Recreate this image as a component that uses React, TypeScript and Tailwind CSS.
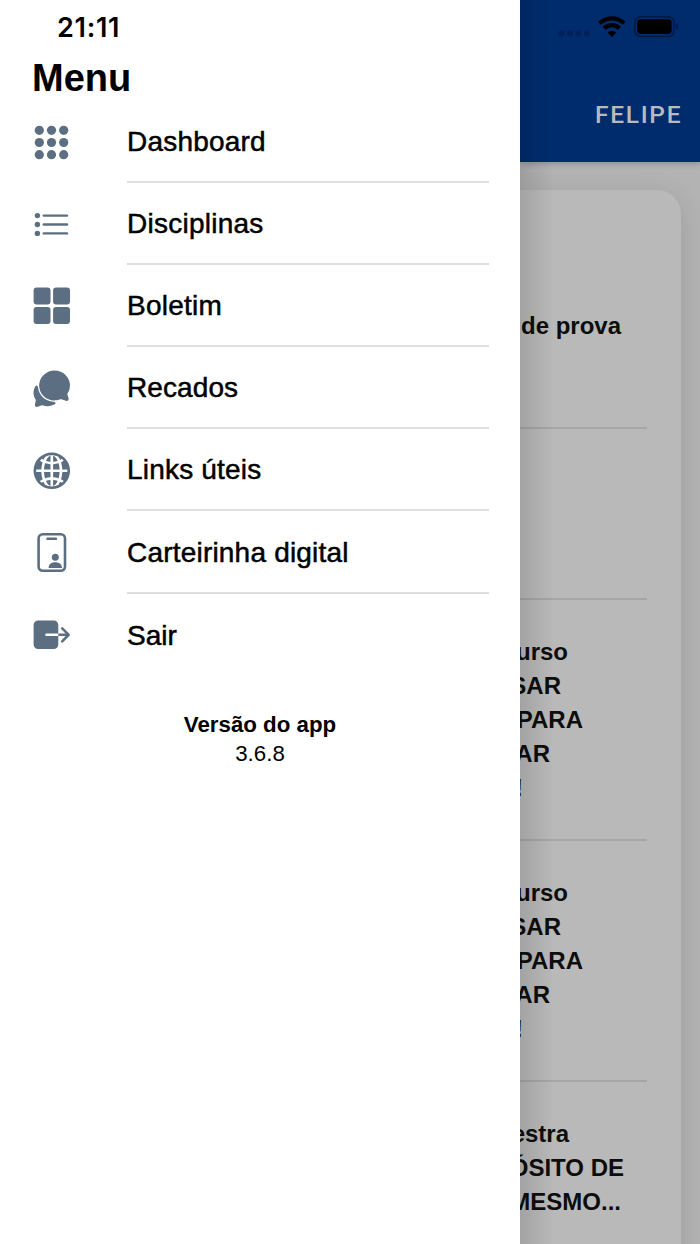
import type { ReactNode } from 'react';
import { IoChatbubbles, IoExit, IoGlobe, IoGrid } from 'react-icons/io5';

interface MenuItem {
  label: string;
  icon: ReactNode;
  spacing: string;
}

interface Notice {
  lines: { text: string; className: string }[];
  className: string;
}

function AppsIcon() {
  const points = [10.3, 22.5, 34.7];
  return (
    <svg viewBox="0 0 45 45" className="w-[45px] h-[45px]" fill="currentColor">
      {points.map((y) => points.map((x) => <circle key={`${x}-${y}`} cx={x} cy={y} r="4.6" />))}
    </svg>
  );
}

function ListIcon() {
  return (
    <svg viewBox="0 0 45 45" className="w-[45px] h-[45px]" fill="currentColor">
      {[13.6, 22.5, 31.4].map((y) => (
        <g key={y}>
          <circle cx="8.4" cy={y} r="2.7" />
          <rect x="13.6" y={y - 1.2} width="25.6" height="2.4" rx="1.2" />
        </g>
      ))}
    </svg>
  );
}

function IdCardIcon() {
  return (
    <svg viewBox="0 0 45 45" className="w-[45px] h-[45px]" fill="currentColor">
      <rect x="9.6" y="4.3" width="26.4" height="36.4" rx="4.2" fill="none" stroke="currentColor" strokeWidth="2.6" />
      <rect x="17.3" y="7.5" width="10.8" height="2.6" rx="1.2" />
      <circle cx="26.3" cy="27.3" r="3.5" />
      <path d="M19.6 38c0-3.6 2.8-5.7 6.7-5.7s6.7 2.1 6.7 5.7z" />
    </svg>
  );
}

const items: MenuItem[] = [
  { label: 'Dashboard', icon: <AppsIcon />, spacing: 'tracking-[0.2px]' },
  { label: 'Disciplinas', icon: <ListIcon />, spacing: 'tracking-[0.25px]' },
  { label: 'Boletim', icon: <IoGrid className="w-[41.6px] h-[41.6px]" />, spacing: 'tracking-[0.25px]' },
  { label: 'Recados', icon: <IoChatbubbles className="w-[41.6px] h-[41.6px]" />, spacing: 'tracking-[0.1px]' },
  { label: 'Links úteis', icon: <IoGlobe className="w-[41.6px] h-[41.6px]" />, spacing: 'tracking-[0.2px]' },
  { label: 'Carteirinha digital', icon: <IdCardIcon />, spacing: 'tracking-[0.2px]' },
  { label: 'Sair', icon: <IoExit className="w-[41.6px] h-[41.6px]" />, spacing: 'tracking-normal' },
];

const course = [
  { text: 'urso', className: 'w-[48px]' },
  { text: 'SAR', className: 'w-[41px]' },
  { text: 'PARA', className: 'w-[63px]' },
  { text: 'AR', className: 'w-[30px]' },
  { text: '!', className: 'w-[3px]' },
];

const notices: Notice[] = [
  { lines: [{ text: 'de prova', className: 'w-[101px]' }], className: 'h-[239px] pt-[119px] border-b-2' },
  { lines: [], className: 'h-[171px] border-b-2' },
  { lines: course, className: 'h-[241px] pt-[35px] border-b-2' },
  { lines: course, className: 'h-[241px] pt-[35px] border-b-2' },
  {
    lines: [
      { text: 'estra', className: 'w-[49px]' },
      { text: 'ÓSITO DE', className: 'w-[104px]' },
      { text: 'MESMO...', className: 'w-[101px]' },
    ],
    className: 'h-[170px] pt-[35px]',
  },
];

function StatusIcons() {
  return (
    <div className="flex items-center h-[54px] pl-[38px]">
      <svg viewBox="0 0 122 26" className="w-[122px] h-[26px]">
        <g fill="#00225a">
          {[0.5, 9, 17.5, 26].map((x) => (
            <rect key={x} x={x} y="16.5" width="6" height="6" rx="1.8" />
          ))}
        </g>
        <g fill="none" stroke="#000" strokeWidth="4.2">
          <path d="M41.5 9.3A17.8 17.8 0 0 1 66.2 9.3" />
          <path d="M46.2 14.3A11 11 0 0 1 61.5 14.3" />
        </g>
        <path d="M49.6 18.5Q53.9 15 58.2 18.5L53.9 23z" />
        <rect x="76.8" y="2.8" width="39.2" height="19.6" rx="5.5" fill="none" stroke="#001b45" strokeWidth="1.7" />
        <rect x="79.2" y="5.2" width="34.4" height="14.8" rx="3.4" />
        <path d="M118 9.3c3 1 3 5.6 0 6.6z" fill="#001b45" />
      </svg>
    </div>
  );
}

function Dashboard() {
  return (
    <div className="relative w-[180px] h-full overflow-hidden bg-[#b3b3b3] font-['Liberation_Sans',sans-serif]">
      <header className="relative z-10 h-[162px] bg-[#002c6e] shadow-[0_2px_6px_rgba(0,0,0,0.2)]">
        <StatusIcons />
        <p className="pt-[46px] pl-[75px] text-[24.5px] leading-[30px] font-medium tracking-[1.7px] text-[#bababa] font-['Roboto',sans-serif]">
          FELIPE
        </p>
      </header>

      <main className="mt-7 w-[161px] h-[1100px] rounded-tr-[24px] bg-[#b9b9b9] shadow-[0_6px_28px_rgba(0,0,0,0.12)]">
        {notices.map((notice, i) => (
          <section key={i} className={`w-[127px] border-[#a6a6a6] ${notice.className}`}>
            {notice.lines.map((line) => (
              <p
                key={line.text}
                className={`flex justify-end whitespace-nowrap text-[24px] leading-[34.1px] font-bold text-[#0d0d0d] ${line.className}`}
              >
                {line.text}
              </p>
            ))}
          </section>
        ))}
      </main>

      {/* Shade thrown by the open drawer */}
      <div className="absolute inset-y-0 left-0 z-20 w-[34px] bg-linear-to-r from-black/12 to-transparent" />
    </div>
  );
}

export default function App() {
  return (
    <div className="flex w-[700px] h-[1244px] overflow-hidden bg-white">
      <aside className="relative z-30 w-[520px] shrink-0 bg-white text-black font-['Liberation_Sans',sans-serif]">
        <div className="h-[54px] pt-px pl-[57px] text-[27px] leading-[54px] font-semibold tracking-[0.7px] font-['Inter',sans-serif]">
          21:11
        </div>
        <h1 className="h-[47px] pt-px pl-8 text-[38px] leading-[47px] font-bold">Menu</h1>

        <nav>
          {items.map((item, i) => (
            <a key={item.label} className="flex h-[82.1px] pl-[29px] pr-[31px]">
              <span className="flex shrink-0 items-center w-[98px] text-[#5c6f82]">
                <span className="flex justify-center w-[45px]">{item.icon}</span>
              </span>
              <span
                className={`flex flex-1 items-center pt-0.5 text-[28px] [-webkit-text-stroke:0.5px_#000] ${item.spacing} ${
                  i < items.length - 1 ? 'border-b-2 border-[#dedede]' : ''
                }`}
              >
                {item.label}
              </span>
            </a>
          ))}
        </nav>

        <footer className="pt-[34px] text-center text-[22.3px] leading-[29px]">
          <p className="font-bold">Versão do app</p>
          <p>3.6.8</p>
        </footer>
      </aside>

      <Dashboard />
    </div>
  );
}
